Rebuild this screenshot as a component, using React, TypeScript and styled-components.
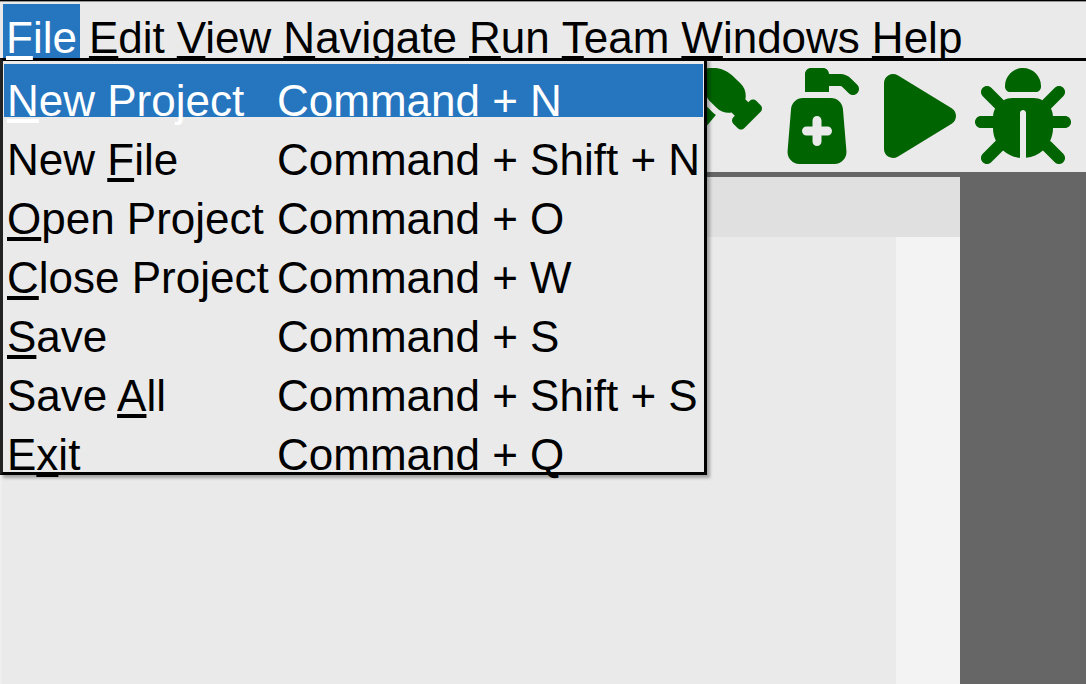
import React from "react";
import styled, { createGlobalStyle, css } from "styled-components";
import { FaBug } from "react-icons/fa6";

const GlobalStyle = createGlobalStyle`
  * { box-sizing: border-box; }
  html, body, #root { height: 100%; }
  body { margin: 0; background: #666666; overflow: hidden; }
  button { appearance: none; border: 0; margin: 0; background: none; font: inherit; color: inherit; text-align: left; }
`;

const Page = styled.div`
  display: flex;
  flex-direction: column;
  min-height: 100%;
  font-family: "Liberation Sans", Arial, sans-serif;
  font-size: 44px;
  line-height: 50px;
  color: #000000;
`;

const MenuBar = styled.nav`
  display: flex;
  gap: 6px;
  height: 61px;
  padding: 3px 3px 0;
  background: #eaeaea;
  border-top: 1px solid #000000;
  border-bottom: 3px solid #000000;
  box-shadow: inset 0 1px 0 #969696;
`;

const FileMenu = styled.div`
  position: relative;
  z-index: 2;
`;

const active = css`
  background: #2675bf;
  color: #ffffff;
`;

const MenuTitle = styled.button<{ $open?: boolean }>`
  height: 54px;
  padding: 9px 3px 0;
  white-space: nowrap;
  ${(p) =>
    p.$open &&
    css`
      position: relative;
      z-index: 1;
      ${active}
    `}
`;

const DropDown = styled.div`
  position: absolute;
  top: 54px;
  left: -3px;
  width: 707px;
  height: 417px;
  padding: 3px 1px 0;
  background: #eaeaea;
  border: 3px solid #000000;
  border-left-color: #222222;
  box-shadow: 3px 3px 3px rgba(0, 0, 0, 0.3);
`;

const Command = styled.button<{ $active?: boolean }>`
  display: grid;
  grid-template-columns: 270px 1fr;
  width: 100%;
  height: 53px;
  margin-bottom: 6px;
  padding: 12px 0 0 3px;
  white-space: nowrap;
  ${(p) => p.$active && active}
`;

const ToolBar = styled.div`
  position: relative;
  z-index: 1;
  display: flex;
  justify-content: flex-end;
  gap: 19px;
  height: 111px;
  padding: 7px 15px 8px;
  background: #eaeaea;
`;

const ToolButton = styled.button`
  display: flex;
  padding: 0;
  color: #006400;

  svg {
    height: 96px;
    width: auto;
    fill: currentColor;
  }
`;

const Workspace = styled.main`
  flex: 1;
  display: flex;
  flex-direction: column;
  margin: 5px 126px 0 0;
`;

const TabStrip = styled.div`
  height: 60px;
  background: #e0e0e0;
`;

const Editor = styled.div`
  flex: 1;
  background: #eaeaea;
  border-left: 2px solid #eeeeee;
  border-right: 64px solid #f3f3f3;
`;

function Label({ text, mnemonic }: { text: string; mnemonic: number }) {
  return (
    <span>
      {text.slice(0, mnemonic)}
      <u>{text[mnemonic]}</u>
      {text.slice(mnemonic + 1)}
    </span>
  );
}

const HammerIcon = () => (
  <svg viewBox="0 0 576 512">
    <path d="M413.5 237.5c-28.2 4.8-58.2-3.6-80-25.4l-38.1-38.1C280.4 159 272 138.8 272 117.6V105.5L192.3 62c-5.3-2.9-8.6-8.6-8.3-14.7s3.9-11.5 9.5-14l47.2-21C259.1 4.2 279 0 299.2 0h18.1c36.7 0 72 14 98.7 39.1l44.6 42c24.2 22.8 33.2 55.7 26.6 86L503 183l8-8c9.4-9.4 24.6-9.4 33.9 0l24 24c9.4 9.4 9.4 24.6 0 33.9l-88 88c-9.4 9.4-24.6 9.4-33.9 0l-24-24c-9.4-9.4-9.4-24.6 0-33.9l8-8-17.5-17.5zM27.4 377.1L260.9 182.6c3.5 4.9 7.5 9.6 11.8 14l38.1 38.1c6 6 12.4 11.2 19.2 15.7L134.9 484.6c-14.5 17.4-36 27.4-58.6 27.4C34.1 512 0 477.8 0 435.7c0-22.6 10.1-44.1 27.4-58.6z" />
  </svg>
);

const PumpIcon = () => (
  <svg viewBox="0 0 448 512">
    <path d="M128 32v96H256V96h60.1c4.2 0 8.3 1.7 11.3 4.7l33.9 33.9c12.5 12.5 32.8 12.5 45.3 0s12.5-32.8 0-45.3L372.7 55.4c-15-15-35.4-23.4-56.6-23.4H256c0-17.7-14.3-32-32-32H160c-17.7 0-32 14.3-32 32zM117.4 160c-33.3 0-61 25.5-63.8 58.7L35 442.7C31.9 480 61.3 512 98.8 512H285.2c37.4 0 66.9-32 63.8-69.3l-18.7-224c-2.8-33.2-30.5-58.7-63.8-58.7H117.4zM168 280c0-13.3 10.7-24 24-24s24 10.7 24 24v32h32c13.3 0 24 10.7 24 24s-10.7 24-24 24H216v32c0 13.3-10.7 24-24 24s-24-10.7-24-24V360H136c-13.3 0-24-10.7-24-24s10.7-24 24-24h32V280z" fillRule="evenodd" />
  </svg>
);

const PlayIcon = () => (
  <svg viewBox="0 0 384 512">
    <path d="M73 39c-14.8-9.1-33.4-9.4-48.5-.9S0 62.6 0 80V432c0 17.4 9.4 33.4 24.5 41.9s33.7 8.1 48.5-.9L361 297c14.3-8.7 23-24.2 23-41s-8.7-32.2-23-41L73 39z" />
  </svg>
);

const menus = ["Edit", "View", "Navigate", "Run", "Team", "Windows", "Help"];

const commands = [
  { text: "New Project", mnemonic: 0, keys: "Command + N" },
  { text: "New File", mnemonic: 4, keys: "Command + Shift + N" },
  { text: "Open Project", mnemonic: 0, keys: "Command + O" },
  { text: "Close Project", mnemonic: 0, keys: "Command + W" },
  { text: "Save", mnemonic: 0, keys: "Command + S" },
  { text: "Save All", mnemonic: 5, keys: "Command + Shift + S" },
  { text: "Exit", mnemonic: 1, keys: "Command + Q" },
];

const tools = [
  { name: "Build", Icon: HammerIcon },
  { name: "Clean", Icon: PumpIcon },
  { name: "Run", Icon: PlayIcon },
  { name: "Debug", Icon: FaBug },
];

export default function App() {
  return (
    <Page>
      <GlobalStyle />
      <MenuBar>
        <FileMenu>
          <MenuTitle $open aria-expanded="true">
            <Label text="File" mnemonic={0} />
          </MenuTitle>
          <DropDown role="menu">
            {commands.map((c, i) => (
              <Command key={c.text} role="menuitem" $active={i === 0}>
                <Label text={c.text} mnemonic={c.mnemonic} />
                <span>{c.keys}</span>
              </Command>
            ))}
          </DropDown>
        </FileMenu>
        {menus.map((m) => (
          <MenuTitle key={m}>
            <Label text={m} mnemonic={0} />
          </MenuTitle>
        ))}
      </MenuBar>
      <ToolBar role="toolbar">
        {tools.map(({ name, Icon }) => (
          <ToolButton key={name} aria-label={name}>
            <Icon />
          </ToolButton>
        ))}
      </ToolBar>
      <Workspace>
        <TabStrip />
        <Editor />
      </Workspace>
    </Page>
  );
}
